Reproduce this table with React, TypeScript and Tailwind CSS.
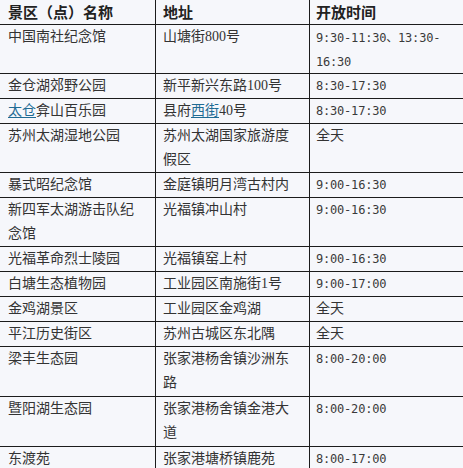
import React from "react";

type Row = {
  name: React.ReactNode;
  addr: React.ReactNode;
  time: React.ReactNode;
  h?: "tall" | "taller";
};

const Link = ({ children }: { children: React.ReactNode }) => (
  <span className="text-[#1f6b94] underline underline-offset-2">{children}</span>
);

const rows: Row[] = [
  {
    name: "中国南社纪念馆",
    addr: "山塘街800号",
    time: (
      <>
        9:30-11:30<span className="font-['Noto_Sans_CJK_SC']">、</span>13:30-
        <br />
        16:30
      </>
    ),
    h: "tall",
  },
  { name: "金仓湖郊野公园", addr: "新平新兴东路100号", time: "8:30-17:30" },
  {
    name: (
      <>
        <Link>太仓</Link>弇山百乐园
      </>
    ),
    addr: (
      <>
        县府<Link>西街</Link>40号
      </>
    ),
    time: "8:30-17:30",
  },
  {
    name: "苏州太湖湿地公园",
    addr: (
      <>
        苏州太湖国家旅游度
        <br />
        假区
      </>
    ),
    time: "全天",
    h: "tall",
  },
  { name: "暴式昭纪念馆", addr: "金庭镇明月湾古村内", time: "9:00-16:30" },
  {
    name: (
      <>
        新四军太湖游击队纪
        <br />
        念馆
      </>
    ),
    addr: "光福镇冲山村",
    time: "9:00-16:30",
    h: "tall",
  },
  { name: "光福革命烈士陵园", addr: "光福镇窑上村", time: "9:00-16:30" },
  { name: "白塘生态植物园", addr: "工业园区南施街1号", time: "9:00-17:00" },
  { name: "金鸡湖景区", addr: "工业园区金鸡湖", time: "全天" },
  { name: "平江历史街区", addr: "苏州古城区东北隅", time: "全天" },
  {
    name: "梁丰生态园",
    addr: (
      <>
        张家港杨舍镇沙洲东
        <br />
        路
      </>
    ),
    time: "8:00-20:00",
    h: "taller",
  },
  {
    name: "暨阳湖生态园",
    addr: (
      <>
        张家港杨舍镇金港大
        <br />
        道
      </>
    ),
    time: "8:00-20:00",
    h: "taller",
  },
  { name: "东渡苑", addr: "张家港塘桥镇鹿苑", time: "8:00-17:00" },
];

const isCjkOnly = (t: React.ReactNode) => typeof t === "string" && /^[\u4e00-\u9fff]+$/.test(t);

const heightClass = (h?: Row["h"]) =>
  h === "taller" ? "h-[50px]" : h === "tall" ? "h-[49px]" : "h-[25px]";

export default function App() {
  return (
    <div className="h-[468px] w-[463px] overflow-hidden bg-[#f6f7fb] font-['Liberation_Serif','Noto_Sans_CJK_SC',sans-serif] text-[14px] text-[#333]">
      <div className="grid grid-cols-[155px_154px_154px] border-b border-[#1c1c1c] text-[15px] font-bold leading-[24px] text-[#222]">
        <div className="pl-2 font-['Noto_Sans_CJK_SC',sans-serif]">景区（点）名称</div>
        <div className="border-l border-[#1c1c1c] pl-[7px] font-['Noto_Sans_CJK_SC',sans-serif]">地址</div>
        <div className="border-l border-[#1c1c1c] pl-[6px] font-['Noto_Sans_CJK_SC',sans-serif]">开放时间</div>
      </div>
      {rows.map((r, i) => (
        <div
          key={i}
          className={`grid grid-cols-[155px_154px_154px] border-b border-[#1c1c1c] leading-[24px] ${heightClass(r.h)}`}
        >
          <div className="whitespace-nowrap pl-2">{r.name}</div>
          <div className="whitespace-nowrap border-l border-[#1c1c1c] pl-[7px]">{r.addr}</div>
          <div
            className={`whitespace-nowrap border-l border-[#1c1c1c] pl-[6px] ${
              isCjkOnly(r.time)
                ? ""
                : "font-['DejaVu_Sans_Mono','Noto_Sans_CJK_SC',monospace] text-[12px] tracking-[-0.2px] text-[#3a3a3a]"
            }`}
          >
            {r.time}
          </div>
        </div>
      ))}
    </div>
  );
}
